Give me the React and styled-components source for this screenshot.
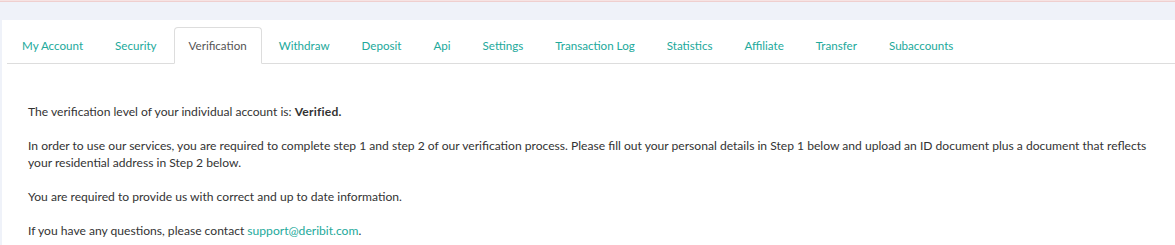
import React from 'react';
import styled, { createGlobalStyle } from 'styled-components';

const GlobalStyle = createGlobalStyle`
    body {
        margin: 0;
        background: #eff2f9;
        font-family: Lato, "Open Sans", sans-serif;
        color: #333;
    }
`

const AlertEdge = styled.div`
    height: 1px;
    background: #f6e3e3;
    border-bottom: 1px solid #efcfcf;
    margin-bottom: 18px;
`

const Panel = styled.div`
    background: white;
    margin-left: 2px;
    padding: 7px 0 0 5px;
    height: 230px;
`

const TabList = styled.ul`
    display: flex;
    list-style: none;
    margin: 0;
    padding: 0;
    border-bottom: 1px solid #ddd;
`

const Tab = styled.li`
    margin-right: 2px;
    margin-bottom: -1px;
    padding: 10px 14px 9px;
    font-size: 11.6px;
    line-height: 16px;
    border: 1px solid ${props => props.active ? '#ddd' : 'transparent'};
    border-bottom-color: ${props => props.active ? 'white' : 'transparent'};
    border-radius: 4px 4px 0 0;
    background: ${props => props.active ? 'white' : 'transparent'};
    color: ${props => props.active ? '#555' : '#22a99b'};
    cursor: pointer;
`

const TabContent = styled.div`
    padding: 39px 25px 0 21px;
    font-size: 12.1px;
    line-height: 17px;
    & p {
        margin: 0 0 17px;
    }
    & b {
        font-weight: 700;
        letter-spacing: 0.2px;
    }
    & a {
        color: #22a99b;
        text-decoration: none;
    }
`

const tabs = ['My Account', 'Security', 'Verification', 'Withdraw', 'Deposit', 'Api', 'Settings',
    'Transaction Log', 'Statistics', 'Affiliate', 'Transfer', 'Subaccounts'];

export default function App() {
    return (
        <div>
            <GlobalStyle/>
            <AlertEdge/>
            <Panel>
                <TabList>
                    {tabs.map(t => <Tab key={t} active={t === 'Verification'}>{t}</Tab>)}
                </TabList>
                <TabContent>
                    <p>The verification level of your individual account is: <b>Verified.</b></p>
                    <p>In order to use our services, you are required to complete step 1 and step 2 of our verification process. Please fill out your personal details in Step 1 below and upload an ID document plus a document that reflects your residential address in Step 2 below.</p>
                    <p>You are required to provide us with correct and up to date information.</p>
                    <p>If you have any questions, please contact <a href="#">support@deribit.com</a>.</p>
                </TabContent>
            </Panel>
        </div>
    )
}
